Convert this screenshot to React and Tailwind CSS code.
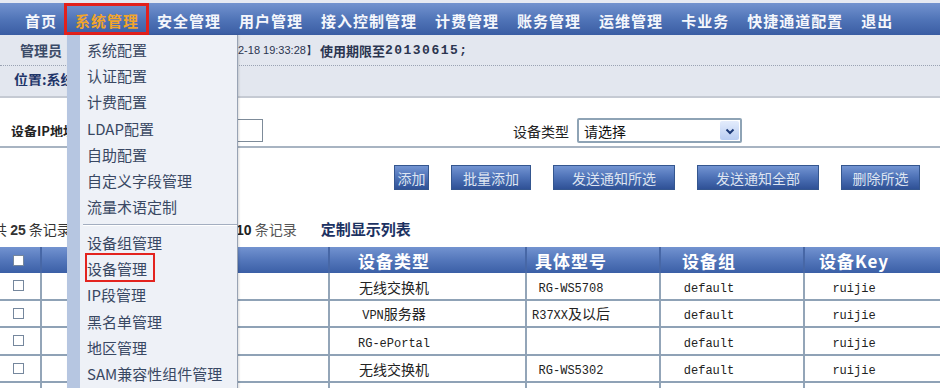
import React from "react";

const CJK = "font-['Noto_Sans_CJK_SC','Noto_Sans',sans-serif]";

function Mixed({ text }) {
  const parts = text.split(/([\x00-\x7F]+)/).filter(Boolean);
  return (
    <span className="leading-none whitespace-nowrap">
      {parts.map((p, i) =>
        /^[\x00-\x7F]+$/.test(p) ? (
          <span key={i} className="font-['Liberation_Mono',monospace] text-[12px]">
            {p}
          </span>
        ) : (
          <span key={i} className="font-['Noto_Sans_CJK_SC',sans-serif] text-[14px]">
            {p}
          </span>
        )
      )}
    </span>
  );
}

const NAV = ["首页", "系统管理", "安全管理", "用户管理", "接入控制管理", "计费管理", "账务管理", "运维管理", "卡业务", "快捷通道配置", "退出"];

const MENU1 = ["系统配置", "认证配置", "计费配置", "LDAP配置", "自助配置", "自定义字段管理", "流量术语定制"];
const MENU2 = ["设备组管理", "设备管理", "IP段管理", "黑名单管理", "地区管理", "SAM兼容性组件管理"];

const COLS = "grid grid-cols-[42px_288px_197px_134px_144px_135px]";

const ROWS = [
  ["无线交换机", "RG-WS5708", "default", "ruijie"],
  ["VPN服务器", "R37XX及以后", "default", "ruijie"],
  ["RG-ePortal", "", "default", "ruijie"],
  ["无线交换机", "RG-WS5302", "default", "ruijie"],
  ["", "", "", ""],
];

function Btn({ w, children }) {
  return (
    <div
      className={`${w} h-[25px] flex items-center justify-center bg-linear-to-b from-[#7394d2] via-[#4d71b6] to-[#2f5196] border border-[#34568f] text-[14px] text-[#dde4f1] leading-none`}
    >
      {children}
    </div>
  );
}

function Check() {
  return <div className="w-[11px] h-[11px] bg-white border border-[#75879d]" />;
}

export default function App() {
  return (
    <div className={`relative w-[940px] h-[388px] overflow-hidden bg-white ${CJK}`}>
      {/* top strip + nav */}
      <div className="h-[3px] bg-[#e6eaf2]" />
      <div className="h-[32px] flex items-stretch pl-[25px] gap-[18px] bg-linear-to-b from-[#7393cf] via-[#5175b8] to-[#3a5da3]">
        {NAV.map((n, i) => (
          <div
            key={n}
            className={`relative flex items-center pt-[3px] text-[15px] font-bold tracking-[1px] leading-none ${
              i === 1 ? "text-[#f3a52a]" : "text-[#f5f7fc]"
            }`}
          >
            {n}
            {i === 1 && (
              <div className="absolute top-0 bottom-0 -left-[11px] -right-[10px] border-[3px] border-[#e3201c]" />
            )}
          </div>
        ))}
      </div>

      {/* info band */}
      <div className="h-[63px] bg-[#e3e7ef] border-b-2 border-[#c5cad3]">
        <div className="h-[30px] flex items-center leading-none">
          <div className="w-[238px] pl-[20px] text-[14px] font-bold text-[#3b4b68]">管理员</div>
          <span className="font-['Liberation_Sans',sans-serif] text-[11px] text-[#2b3550]">2-18 19:33:28】</span>
          <span className="ml-[3px] text-[13px] font-bold text-[#2b3550]">使用期限至</span>
          <span className="font-['Liberation_Mono',monospace] text-[13px] tracking-[1.5px] font-bold text-[#2b3550]">20130615;</span>
        </div>
        <div className="border-t border-dotted border-[#9aa3b3]" />
        <div className="h-[26px] flex items-center pl-[14px]">
          <div className="w-[53px] overflow-hidden whitespace-nowrap text-[14px] font-bold text-[#1f3569] leading-none">
            位置:系统管理
          </div>
        </div>
      </div>

      {/* search row */}
      <div className="h-[50px] border-b-2 border-[#a8b4c2] flex items-start pt-[20px]">
        <div className="w-[170px] pl-[11px] h-[25px] flex items-center text-[13px] font-bold text-[#222] leading-none">
          <div className="w-[56px] overflow-hidden whitespace-nowrap">设备IP地址</div>
        </div>
        <div className="w-[93px] h-[23px] mt-[1px] border border-[#7d8b99] bg-white" />
        <div className="ml-[250px] h-[25px] flex items-center text-[14px] text-[#222] leading-none">设备类型</div>
        <div className="ml-[8px] w-[165px] h-[25px] border-2 border-[#8ea3b5] rounded-[2px] bg-white flex items-center justify-between pl-[5px] pr-[1px]">
          <span className="text-[14px] text-[#111] leading-none">请选择</span>
          <div className="w-[19px] h-[19px] bg-linear-to-b from-[#e4ecfc] to-[#b9cdf3] rounded-[2px] flex items-center justify-center">
            <svg width="12" height="12" viewBox="0 0 12 12">
              <path d="M2.5 4.5 L6 8 L9.5 4.5" fill="none" stroke="#1d3a78" strokeWidth="2" />
            </svg>
          </div>
        </div>
      </div>

      {/* buttons */}
      <div className="h-[56px] flex justify-end pr-[20px] pt-[17px] gap-[22px]">
        <Btn w="w-[35px]">添加</Btn>
        <Btn w="w-[80px]">批量添加</Btn>
        <Btn w="w-[122px]">发送通知所选</Btn>
        <Btn w="w-[122px]">发送通知全部</Btn>
        <Btn w="w-[79px]">删除所选</Btn>
      </div>

      {/* count row */}
      <div className="h-[43px] pt-[15px] flex leading-[20px]">
        <div className="w-[236px]">
          <div className="w-[67px] overflow-hidden whitespace-nowrap text-[14px] text-[#333]">
            <div className="-ml-[7px]">
              共 <span className="font-bold font-['Liberation_Sans',sans-serif]">25</span> 条记录
            </div>
          </div>
        </div>
        <div className="text-[14px] text-[#555]">
          <span className="font-bold text-[#222] font-['Liberation_Sans',sans-serif]">10</span> 条记录
        </div>
        <div className="ml-[24px] text-[15px] font-bold text-[#1c3262]">定制显示列表</div>
      </div>

      {/* table */}
      <div>
        <div className={`${COLS} h-[26px] bg-linear-to-b from-[#7393d0] via-[#5477bb] to-[#3b5fa6] text-white font-bold text-[17px] tracking-[1px] leading-none`}>
          <div className="flex items-center pl-[13px] border-r-2 border-[#4767a6]">
            <Check />
          </div>
          <div className="border-r-2 border-[#4767a6]" />
          <div className="flex items-center justify-center pr-[67px] border-r-2 border-[#4767a6]">设备类型</div>
          <div className="flex items-center justify-center pr-[44px] border-r-2 border-[#4767a6]">具体型号</div>
          <div className="flex items-center justify-center pr-[46px] border-r-2 border-[#4767a6]">设备组</div>
          <div className="flex items-center justify-center pr-[37px]">设备Key</div>
        </div>
        {ROWS.map((r, i) => (
          <div key={i} className={`${COLS} h-[27.5px] border-b-2 border-[#8fa2b6] text-[#222] leading-none`}>
            <div className="flex items-center pl-[13px] border-r-2 border-[#93a5b8]">
              <Check />
            </div>
            <div className="border-r-2 border-[#93a5b8]" />
            <div className="flex items-center justify-center pr-[67px] border-r-2 border-[#93a5b8]">
              <Mixed text={r[0]} />
            </div>
            <div className="flex items-center justify-center pr-[44px] border-r-2 border-[#93a5b8]">
              <Mixed text={r[1]} />
            </div>
            <div className="flex items-center justify-center pr-[46px] border-r-2 border-[#93a5b8]">
              <Mixed text={r[2]} />
            </div>
            <div className="flex items-center justify-center pr-[37px]">
              <Mixed text={r[3]} />
            </div>
          </div>
        ))}
      </div>

      {/* dropdown menu */}
      <div className="absolute left-[67px] top-[35px] w-[171px] h-[360px] flex bg-[#eef1f7] border-r border-[#98a3b4] shadow-[1px_0_2px_rgba(0,0,0,0.15)]">
        <div className="w-[13px] bg-[#b6c6e1]" />
        <div className="flex-1 pt-[1px]">
          {MENU1.map((m) => (
            <div key={m} className="h-[26.3px] flex items-center pl-[7px] text-[15px] text-[#394863] leading-none">
              {m}
            </div>
          ))}
          <div className="h-[9px] flex items-center pl-[3px]">
            <div className="w-full border-t border-b border-t-[#a3aec0] border-b-white" />
          </div>
          {MENU2.map((m, i) => (
            <div key={m} className="relative h-[26.3px] flex items-center pl-[7px] text-[15px] text-[#394863] leading-none">
              {m}
              {i === 1 && (
                <div className="absolute left-[5px] -top-[2px] w-[70px] h-[29px] border-2 border-[#e3231f]" />
              )}
            </div>
          ))}
        </div>
      </div>
    </div>
  );
}
